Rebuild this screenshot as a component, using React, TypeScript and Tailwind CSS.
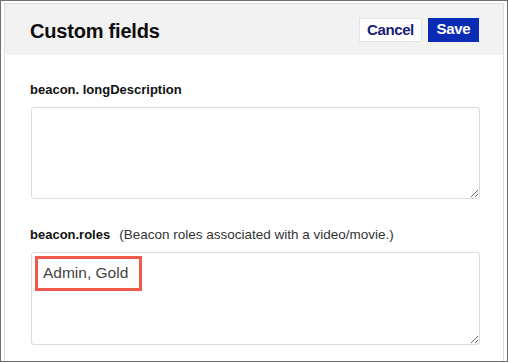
import { useState } from 'react';

const font = { fontFamily: '"Liberation Sans", Arial, sans-serif' };

export default function App() {
  const [longDescription, setLongDescription] = useState('');
  const [roles, setRoles] = useState('Admin, Gold');

  return (
    <div
      className="w-[508px] h-[362px] overflow-hidden bg-white border border-[#6e6e6e] pt-[2px] px-[3px]"
      style={font}
    >
      <div className="h-full bg-white border-t border-x border-[#dedede]">
        {/* Header */}
        <div className="h-[51px] bg-[#f2f2f2] flex items-center justify-between pl-[25px] pr-[24px]">
          <h2 className="text-[20px] font-bold tracking-[-0.2px] text-[#0d0d0d] pt-[2px]">Custom fields</h2>
          <div className="flex items-center gap-[6px]">
            <button className="h-[24px] w-[63px] bg-white border border-[#e3e3e3] text-[15px] font-bold tracking-[-0.4px] text-[#18217a]">
              Cancel
            </button>
            <button className="h-[24px] w-[51px] bg-[#0a2bb3] text-[15px] font-bold tracking-[-0.3px] text-white">
              Save
            </button>
          </div>
        </div>

        {/* Body */}
        <div className="pl-[25px] pr-[24px] pt-[27px]">
          <label htmlFor="longDescription" className="block text-[13px] leading-[16px] font-bold text-[#111111]">
            beacon. longDescription
          </label>
          <textarea
            id="longDescription"
            value={longDescription}
            onChange={(e) => setLongDescription(e.target.value)}
            className="mt-[9px] ml-px block w-[449px] h-[92px] border border-[#dcdcdc] rounded-[3px] bg-white outline-none"
          />

          <div className="mt-[28px] flex items-baseline gap-[9px] leading-[16px]">
            <label htmlFor="roles" className="text-[13px] font-bold text-[#111111]">
              beacon.roles
            </label>
            <span className="text-[13.5px] text-[#333333]">(Beacon roles associated with a video/movie.)</span>
          </div>
          <div className="relative mt-[9px] ml-px w-[449px]">
            <textarea
              id="roles"
              value={roles}
              onChange={(e) => setRoles(e.target.value)}
              className="block w-full h-[93px] border border-[#dcdcdc] rounded-[3px] bg-white outline-none pt-[8px] pl-[11px] text-[15.5px] leading-[24px] text-[#444444]"
              style={font}
            />
            {/* highlight annotation */}
            <div className="absolute left-[4px] top-[4px] w-[107px] h-[35px] border-[3px] border-[#f05a4c] pointer-events-none" />
          </div>
        </div>
      </div>
    </div>
  );
}
